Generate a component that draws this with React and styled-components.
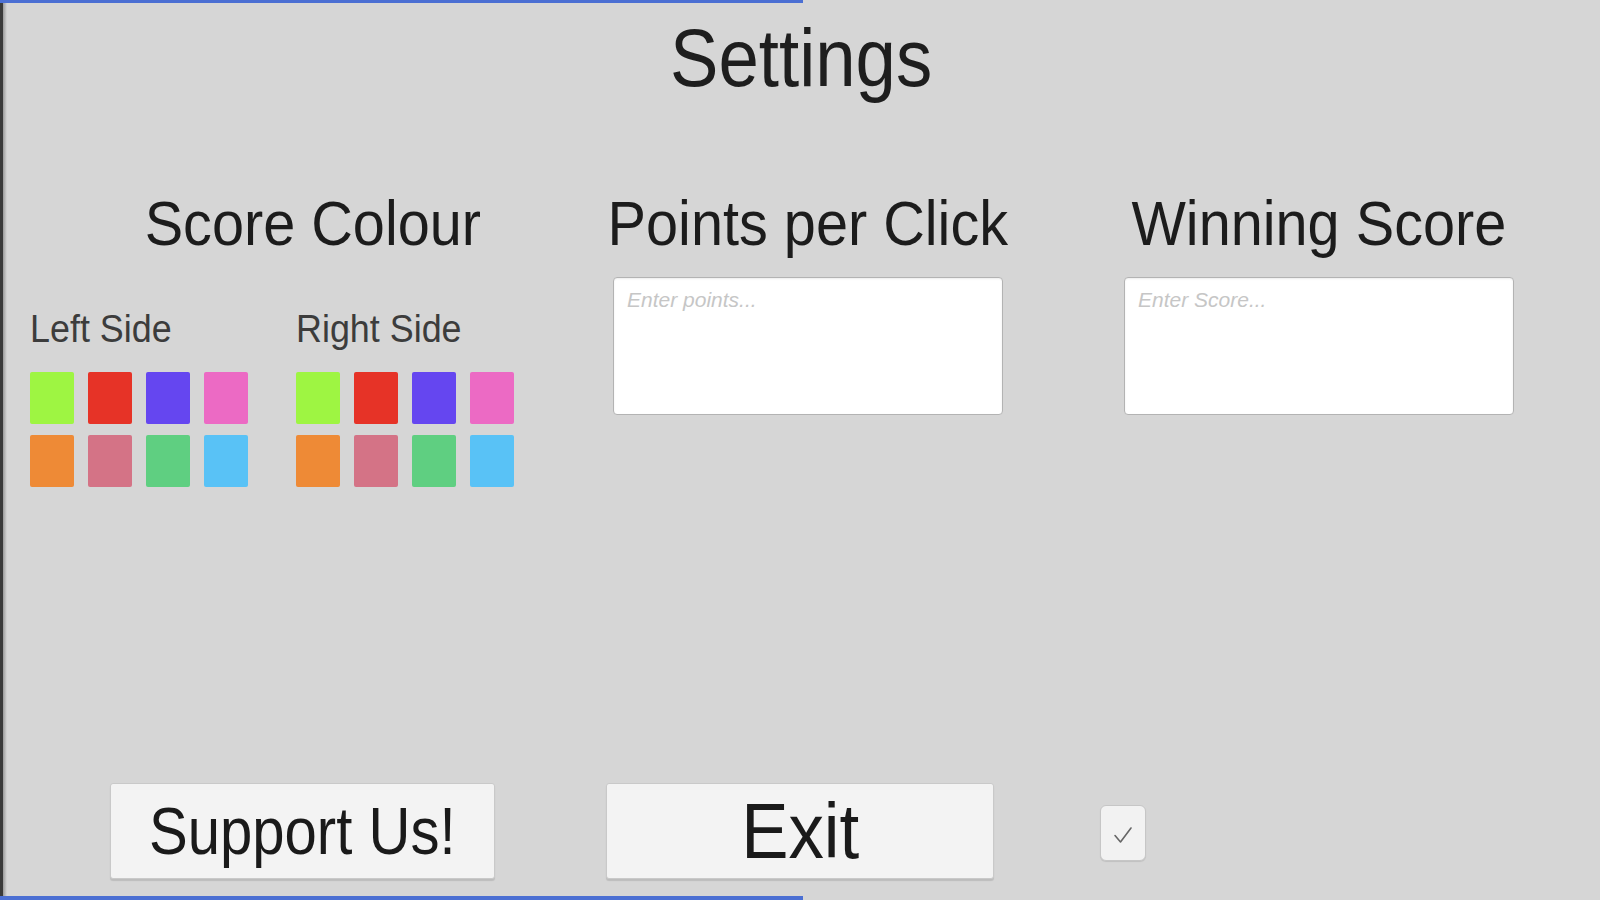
import React from 'react';
import styled, { createGlobalStyle } from 'styled-components';

const GlobalStyle = createGlobalStyle`
  html, body {
    margin: 0;
    padding: 0;
    background: #d6d6d6;
  }
  * {
    box-sizing: border-box;
  }
`;

const Frame = styled.div`
  width: 1600px;
  height: 900px;
  display: flex;
  flex-direction: column;
  background: #d6d6d6;
  font-family: "Liberation Sans", Arial, sans-serif;
  color: #1f1f1f;
  overflow: hidden;
`;

const ProgressBar = styled.div`
  flex: none;
  width: 803px;
  height: ${p => p.$height}px;
  background: #4b6fd3;
`;

const Body = styled.div`
  flex: 1;
  display: flex;
  flex-direction: column;
  border-left: 3px solid #3a3a3a;
  background: linear-gradient(to right, #9a9a9a 0, #d6d6d6 4px);
  padding-bottom: 17px;
`;

const Title = styled.h1`
  align-self: center;
  margin: 10px 0 0;
  font-size: 82px;
  line-height: 90px;
  font-weight: 400;
  color: #1e1e1e;
  white-space: nowrap;
  transform: scaleX(0.885);
`;

const Columns = styled.div`
  display: flex;
  margin-top: 84px;
  padding-left: 27px;
`;

const Column = styled.div`
  display: flex;
  flex-direction: column;
  align-items: center;
  width: ${p => p.$width}px;
  margin-left: ${p => p.$offset || 0}px;
`;

const Heading = styled.h2`
  margin: 0;
  font-size: 63px;
  line-height: 72px;
  font-weight: 400;
  color: #1c1c1c;
  white-space: nowrap;
  transform: scaleX(0.915);
`;

const Sides = styled.div`
  align-self: flex-start;
  display: flex;
  gap: 48px;
  margin-top: 47px;
`;

const Side = styled.div`
  display: flex;
  flex-direction: column;
`;

const SideLabel = styled.div`
  font-size: 39px;
  line-height: 46px;
  color: #3c3c3c;
  white-space: nowrap;
  transform: scaleX(0.92);
  transform-origin: left center;
`;

const SwatchGrid = styled.div`
  display: grid;
  grid-template-columns: repeat(4, 44px);
  grid-auto-rows: 52px;
  column-gap: 14px;
  row-gap: 11px;
  margin-top: 20px;
`;

const Swatch = styled.button`
  border: none;
  padding: 0;
  border-radius: 2px;
  background: ${p => p.$color};
  cursor: pointer;
`;

const Field = styled.textarea`
  margin-top: 18px;
  width: 390px;
  height: 138px;
  resize: none;
  border: 1px solid #b3b3b3;
  border-radius: 4px;
  background: #ffffff;
  box-shadow: inset 0 1px 2px rgba(0, 0, 0, 0.08);
  padding: 10px 13px;
  font-family: "Liberation Sans", Arial, sans-serif;
  font-size: 21px;
  line-height: 24px;
  font-style: italic;
  color: #333;
  outline: none;

  &::placeholder {
    color: #c6c6c6;
  }
`;

const Spacer = styled.div`
  flex: 1;
`;

const Footer = styled.div`
  display: flex;
  align-items: center;
  padding-left: 107px;
`;

const Button = styled.button`
  width: ${p => p.$width}px;
  height: 96px;
  margin-left: ${p => p.$offset || 0}px;
  display: flex;
  align-items: center;
  justify-content: center;
  padding: 0;
  background: #f3f3f3;
  border: 1px solid #c9c9c9;
  border-radius: 3px;
  box-shadow: 0 2px 1px rgba(0, 0, 0, 0.12);
  font-family: "Liberation Sans", Arial, sans-serif;
  font-size: ${p => p.$size}px;
  line-height: 96px;
  color: #1a1a1a;
  cursor: pointer;
`;

const ButtonText = styled.span`
  display: inline-block;
  white-space: nowrap;
  transform: scaleX(${p => p.$squeeze});
`;

const Toggle = styled.label`
  margin-left: 106px;
  margin-top: 4px;
  width: 46px;
  height: 56px;
  display: flex;
  align-items: center;
  justify-content: center;
  padding-top: 4px;
  background: #f2f2f2;
  border: 1px solid #c6c6c6;
  border-radius: 6px;
  box-shadow: 0 1px 1px rgba(0, 0, 0, 0.1);
  cursor: pointer;
`;

const swatches = ['#9ef542', '#e63327', '#6546f0', '#ec6ac4', '#ee8a36', '#d47386', '#5fcf81', '#59c2f6'];

function SwatchSide({ label }) {
  return (
    <Side>
      <SideLabel>{label}</SideLabel>
      <SwatchGrid>
        {swatches.map(c => (
          <Swatch key={c} $color={c} aria-label={c} />
        ))}
      </SwatchGrid>
    </Side>
  );
}

export default function App() {
  return (
    <>
      <GlobalStyle />
      <Frame>
        <ProgressBar $height={3} />
        <Body>
          <Title>Settings</Title>
          <Columns>
            <Column $width={566}>
              <Heading>Score Colour</Heading>
              <Sides>
                <SwatchSide label="Left Side" />
                <SwatchSide label="Right Side" />
              </Sides>
            </Column>
            <Column $width={390} $offset={17}>
              <Heading>Points per Click</Heading>
              <Field placeholder="Enter points..." />
            </Column>
            <Column $width={390} $offset={121}>
              <Heading>Winning Score</Heading>
              <Field placeholder="Enter Score..." />
            </Column>
          </Columns>
          <Spacer />
          <Footer>
            <Button $width={385} $size={66}>
              <ButtonText $squeeze={0.88}>Support Us!</ButtonText>
            </Button>
            <Button $width={388} $size={77} $offset={111}>
              <ButtonText $squeeze={0.92}>Exit</ButtonText>
            </Button>
            <Toggle>
              <svg width="22" height="20" viewBox="0 0 22 20" fill="none">
                <path d="M3 10.5 L8.5 17 L19 3" stroke="#666" strokeWidth="1.6" strokeLinecap="round" strokeLinejoin="round" />
              </svg>
            </Toggle>
          </Footer>
        </Body>
        <ProgressBar $height={4} />
      </Frame>
    </>
  );
}
